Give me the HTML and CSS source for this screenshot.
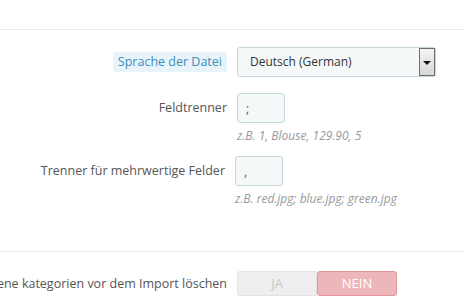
FILE: index.html
```html
<!DOCTYPE html>
<html lang="de">
<head>
  <meta charset="UTF-8" />
  <title>Import</title>
  <link rel="stylesheet" href="styles.css">
</head>
<body>
  <div class="top"></div>

  <div class="section">
    <div class="row">
      <label class="label"><span class="hint">Sprache der Datei</span></label>
      <div class="select">
        <span class="select-text">Deutsch (German)</span>
        <span class="select-arrow"></span>
      </div>
    </div>

    <div class="row">
      <label class="label">Feldtrenner</label>
      <input class="field" type="text" value=";" />
      <p class="help">z.B. 1, Blouse, 129.90, 5</p>
    </div>

    <div class="row shift">
      <label class="label">Trenner für mehrwertige Felder</label>
      <input class="field" type="text" value="," />
      <p class="help">z.B. red.jpg; blue.jpg; green.jpg</p>
    </div>
  </div>

  <div class="section last">
    <div class="row">
      <label class="label">Alle vorhandene kategorien vor dem Import löschen</label>
      <div class="switch">
        <span class="opt off">JA</span>
        <span class="opt on">NEIN</span>
      </div>
    </div>
  </div>
</body>
</html>
```

FILE: styles.css
```css
body {
  margin: 0;
  font-family: "Open Sans", "Noto Sans", sans-serif;
  font-size: 12.5px;
  color: #555;
  background-color: #fff;
  overflow: hidden;
}
.top {
  height: 29px;
  border-bottom: 1px solid #eaeaea;
}
.section {
  padding: 17px 0 27px;
  border-bottom: 1px solid #eaeaea;
}
.section.last {
  padding: 19px 0 0;
  border-bottom: none;
}
.row {
  display: grid;
  grid-template-columns: 227px 1fr;
  column-gap: 10px;
  margin-bottom: 16px;
}
.row.shift {
  grid-template-columns: 225px 1fr;
  margin-top: -5px;
}
.label {
  grid-column: 1;
  align-self: center;
  text-align: right;
  line-height: 18px;
  white-space: nowrap;
  direction: rtl;
}
.hint {
  display: inline-block;
  direction: ltr;
  padding: 1px 5px;
  background-color: #e9f4fa;
  color: #3d8dbb;
  border-radius: 3px;
}
.select {
  grid-column: 2;
  display: flex;
  align-items: stretch;
  width: 197px;
  height: 28px;
  border: 1px solid #c7d6db;
  border-radius: 3px;
  background-color: #f5f8f9;
}
.select-text {
  flex: 1;
  padding-left: 12px;
  line-height: 28px;
  font-size: 12px;
  color: #333;
}
.select-arrow {
  position: relative;
  width: 14px;
  border: 1px solid #6f6f6f;
  background: linear-gradient(#f4f4f4, #d6d6d6);
}
.select-arrow::after {
  content: "";
  position: absolute;
  left: 3px;
  top: 12px;
  border-left: 4px solid transparent;
  border-right: 4px solid transparent;
  border-top: 4px solid #111;
}
.field {
  grid-column: 2;
  box-sizing: border-box;
  width: 48px;
  height: 30px;
  margin: 0;
  padding: 0 8px;
  border: 1px solid #c7d6db;
  border-radius: 3px;
  background-color: #f5f8f9;
  font-family: inherit;
  font-size: 12px;
  color: #555;
}
.help {
  grid-column: 2;
  margin: 4px 0 0;
  line-height: 18px;
  font-size: 12px;
  font-style: italic;
  color: #999;
}
.switch {
  grid-column: 2;
  display: flex;
  width: 160px;
  height: 25px;
}
.opt {
  flex: 1;
  box-sizing: border-box;
  text-align: center;
  line-height: 23px;
  font-size: 13px;
}
.opt.off {
  background-color: #eee;
  border: 1px solid #e3e3e3;
  border-radius: 3px 0 0 3px;
  color: #c9c9c9;
}
.opt.on {
  background-color: #ecb6ba;
  border: 1px solid #e0959a;
  border-radius: 3px;
  color: #fff;
}
```
